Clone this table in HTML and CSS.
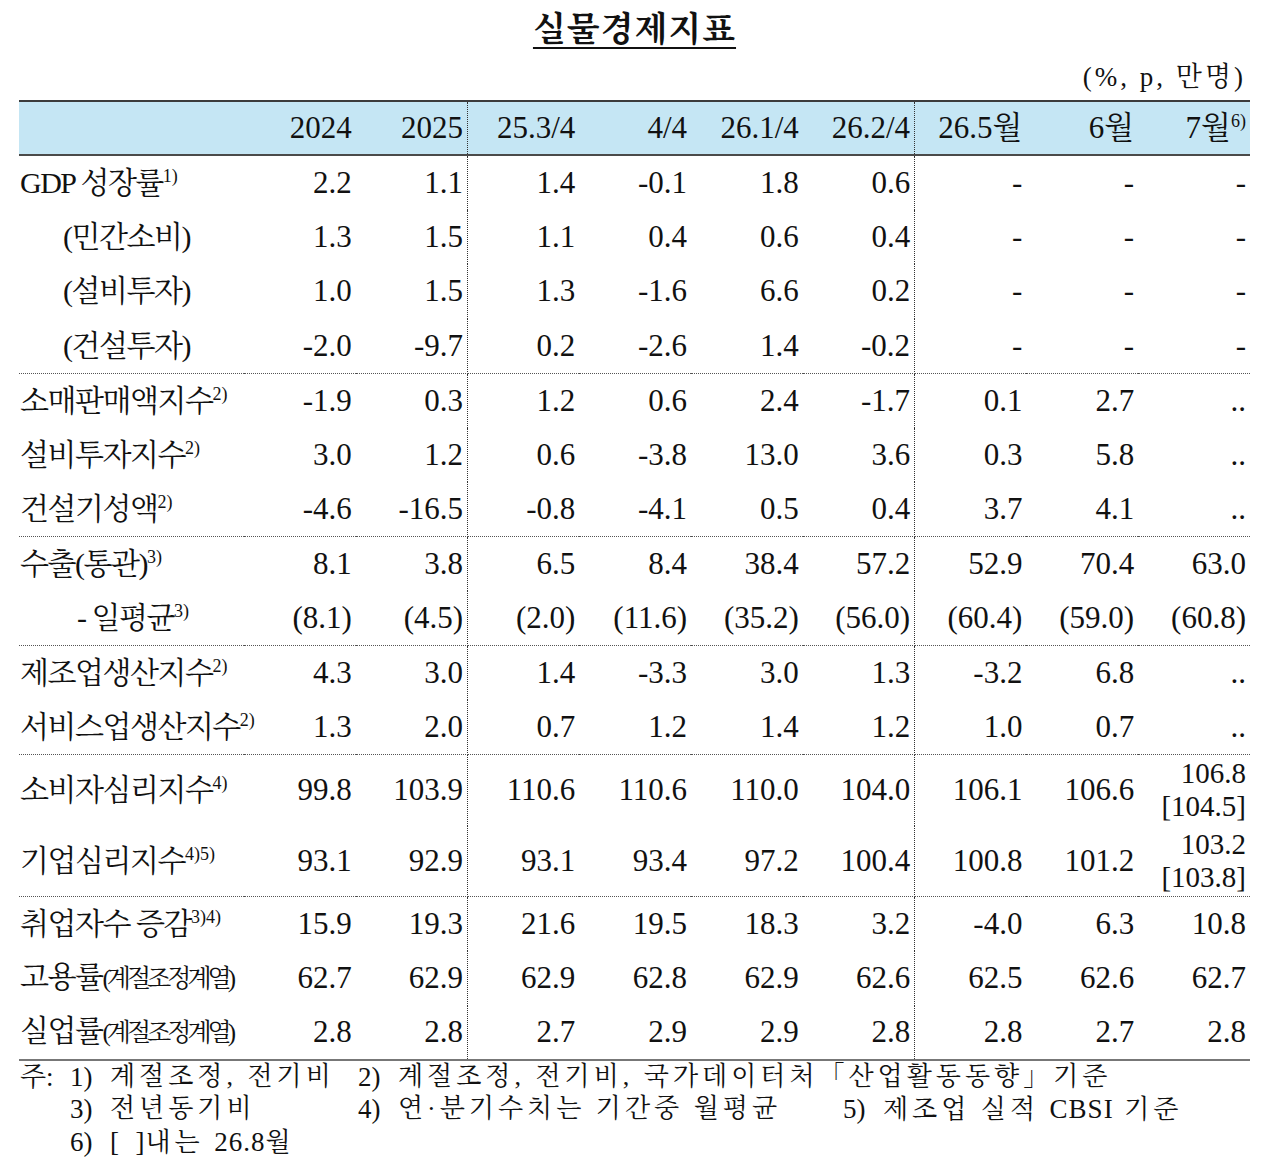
FILE: index.html
```html
<!DOCTYPE html>
<html lang="ko">
<head>
<meta charset="utf-8">
<title>실물경제지표</title>
<link rel="stylesheet" href="styles.css">
</head>
<body>
<div class="page">
  <h1 class="title"><span>실물경제지표</span></h1>
  <div class="unit">(%, p, 만명)</div>
  <table class="ind">
    <colgroup>
      <col class="c-label">
      <col class="c-num"><col class="c-num"><col class="c-num"><col class="c-num"><col class="c-num">
      <col class="c-num"><col class="c-num"><col class="c-num"><col class="c-num">
    </colgroup>
    <thead>
      <tr>
        <th></th><th>2024</th><th>2025</th><th>25.3/4</th><th>4/4</th><th>26.1/4</th><th>26.2/4</th><th>26.5월</th><th>6월</th><th>7월<sup>6)</sup></th>
      </tr>
    </thead>
    <tbody>
      <tr><td class="lbl">GDP 성장률<sup>1)</sup></td><td>2.2</td><td>1.1</td><td>1.4</td><td>-0.1</td><td>1.8</td><td>0.6</td><td>-</td><td>-</td><td>-</td></tr>
      <tr><td class="lbl ind1">(민간소비)</td><td>1.3</td><td>1.5</td><td>1.1</td><td>0.4</td><td>0.6</td><td>0.4</td><td>-</td><td>-</td><td>-</td></tr>
      <tr><td class="lbl ind1">(설비투자)</td><td>1.0</td><td>1.5</td><td>1.3</td><td>-1.6</td><td>6.6</td><td>0.2</td><td>-</td><td>-</td><td>-</td></tr>
      <tr class="sep"><td class="lbl ind1">(건설투자)</td><td>-2.0</td><td>-9.7</td><td>0.2</td><td>-2.6</td><td>1.4</td><td>-0.2</td><td>-</td><td>-</td><td>-</td></tr>
      <tr><td class="lbl">소매판매액지수<sup>2)</sup></td><td>-1.9</td><td>0.3</td><td>1.2</td><td>0.6</td><td>2.4</td><td>-1.7</td><td>0.1</td><td>2.7</td><td>..</td></tr>
      <tr><td class="lbl">설비투자지수<sup>2)</sup></td><td>3.0</td><td>1.2</td><td>0.6</td><td>-3.8</td><td>13.0</td><td>3.6</td><td>0.3</td><td>5.8</td><td>..</td></tr>
      <tr class="sep"><td class="lbl">건설기성액<sup>2)</sup></td><td>-4.6</td><td>-16.5</td><td>-0.8</td><td>-4.1</td><td>0.5</td><td>0.4</td><td>3.7</td><td>4.1</td><td>..</td></tr>
      <tr><td class="lbl">수출(통관)<sup>3)</sup></td><td>8.1</td><td>3.8</td><td>6.5</td><td>8.4</td><td>38.4</td><td>57.2</td><td>52.9</td><td>70.4</td><td>63.0</td></tr>
      <tr class="sep"><td class="lbl ind2">- 일평균<sup>3)</sup></td><td>(8.1)</td><td>(4.5)</td><td>(2.0)</td><td>(11.6)</td><td>(35.2)</td><td>(56.0)</td><td>(60.4)</td><td>(59.0)</td><td>(60.8)</td></tr>
      <tr><td class="lbl">제조업생산지수<sup>2)</sup></td><td>4.3</td><td>3.0</td><td>1.4</td><td>-3.3</td><td>3.0</td><td>1.3</td><td>-3.2</td><td>6.8</td><td>..</td></tr>
      <tr class="sep"><td class="lbl">서비스업생산지수<sup>2)</sup></td><td>1.3</td><td>2.0</td><td>0.7</td><td>1.2</td><td>1.4</td><td>1.2</td><td>1.0</td><td>0.7</td><td>..</td></tr>
      <tr class="tall"><td class="lbl">소비자심리지수<sup>4)</sup></td><td>99.8</td><td>103.9</td><td>110.6</td><td>110.6</td><td>110.0</td><td>104.0</td><td>106.1</td><td>106.6</td><td class="two"><span class="ln">106.8</span><span class="ln">[104.5]</span></td></tr>
      <tr class="tall sep"><td class="lbl">기업심리지수<sup>4)5)</sup></td><td>93.1</td><td>92.9</td><td>93.1</td><td>93.4</td><td>97.2</td><td>100.4</td><td>100.8</td><td>101.2</td><td class="two"><span class="ln">103.2</span><span class="ln">[103.8]</span></td></tr>
      <tr><td class="lbl">취업자수 증감<sup>3)4)</sup></td><td>15.9</td><td>19.3</td><td>21.6</td><td>19.5</td><td>18.3</td><td>3.2</td><td>-4.0</td><td>6.3</td><td>10.8</td></tr>
      <tr><td class="lbl">고용률<span class="small">(계절조정계열)</span></td><td>62.7</td><td>62.9</td><td>62.9</td><td>62.8</td><td>62.9</td><td>62.6</td><td>62.5</td><td>62.6</td><td>62.7</td></tr>
      <tr class="last"><td class="lbl">실업률<span class="small">(계절조정계열)</span></td><td>2.8</td><td>2.8</td><td>2.7</td><td>2.9</td><td>2.9</td><td>2.8</td><td>2.8</td><td>2.7</td><td>2.8</td></tr>
    </tbody>
  </table>
  <div class="notes">
    <span class="lead">주:</span>
    <div class="note"><span class="n">1)</span><span class="t">계절조정, 전기비</span></div>
    <div class="note wide"><span class="n">2)</span><span class="t">계절조정, 전기비, 국가데이터처「산업활동동향」기준</span></div>
    <div class="note first"><span class="n">3)</span><span class="t">전년동기비</span></div>
    <div class="note"><span class="n">4)</span><span class="t">연·분기수치는 기간중 월평균</span></div>
    <div class="note"><span class="n">5)</span><span class="t">제조업 실적 <span class="lat">CBSI</span> 기준</span></div>
    <div class="note first"><span class="n">6)</span><span class="t"><span class="lat">[&nbsp;&nbsp;]</span>내는 <span class="lat">26.8</span>월</span></div>
  </div>
</div>
</body>
</html>
```

FILE: styles.css
```css
body {
  margin: 0;
  background: #ffffff;
  color: #111111;
  font-family: "Liberation Serif", "Noto Serif CJK KR", "Noto Serif KR", "Nanum Myeongjo", "UnBatang", "Noto Sans CJK KR", serif;
}

.page {
  width: 1231px;
  margin-left: 19px;
}

.title {
  margin: 0;
  padding-top: 10px;
  text-align: center;
  font-size: 34px;
  font-weight: 700;
  line-height: 40px;
  letter-spacing: 1px;
}

.title span {
  text-decoration: underline;
  text-decoration-thickness: 2px;
  text-underline-offset: 6px;
}

.unit {
  margin-top: 12px;
  padding-right: 4px;
  text-align: right;
  font-size: 27px;
  line-height: 30px;
  letter-spacing: 3px;
}

.ind {
  margin-top: 8px;
  width: 1231px;
  border-collapse: collapse;
  table-layout: fixed;
  font-size: 31px;
}

.c-label { width: 225px; }
.c-num { width: 111.75px; }

.ind th,
.ind td {
  padding: 0 4px 0 0;
  text-align: right;
  vertical-align: middle;
  white-space: nowrap;
  font-weight: normal;
  line-height: 34px;
}

.ind thead tr {
  height: 54px;
  background: #c5e6f4;
}

.ind thead th {
  border-top: 2px solid #3c3c3c;
  border-bottom: 2px solid #4a4a4a;
}

.ind tbody tr { height: 54.5px; }
.ind tbody tr.tall { height: 71px; }

.ind tr.sep td { border-bottom: 1px dotted #555555; }
.ind tr.last td { border-bottom: 2px solid #777777; }

.ind th:nth-child(3),
.ind td:nth-child(3),
.ind th:nth-child(7),
.ind td:nth-child(7) {
  border-right: 1px dotted #333333;
}

.ind td.lbl {
  text-align: left;
  padding-left: 1px;
  font-size: 30px;
  letter-spacing: -1.5px;
}

.ind td.ind1 { padding-left: 44px; }
.ind td.ind2 { padding-left: 58px; }

.ind td.two {
  font-size: 29px;
  line-height: 33px;
}

.ln { display: block; }

.small {
  font-size: 25px;
  letter-spacing: -4px;
}

sup {
  font-size: 18px;
  line-height: 0;
  vertical-align: 11px;
  letter-spacing: 0;
}

.notes {
  display: grid;
  grid-template-columns: 50px 288px 485px 1fr;
  padding-left: 1px;
  font-size: 26px;
  line-height: 32px;
}

.lead {
  grid-column: 1;
  grid-row: 1;
  font-size: 27px;
}

.note {
  display: flex;
  white-space: nowrap;
}

.note.first { grid-column: 2; }
.note.wide { grid-column: 3 / 5; }

.note .n {
  width: 40px;
  flex: none;
  font-size: 27px;
}

.note .t { letter-spacing: 4px; }

.lat {
  font-size: 27px;
  letter-spacing: 1px;
}
```
